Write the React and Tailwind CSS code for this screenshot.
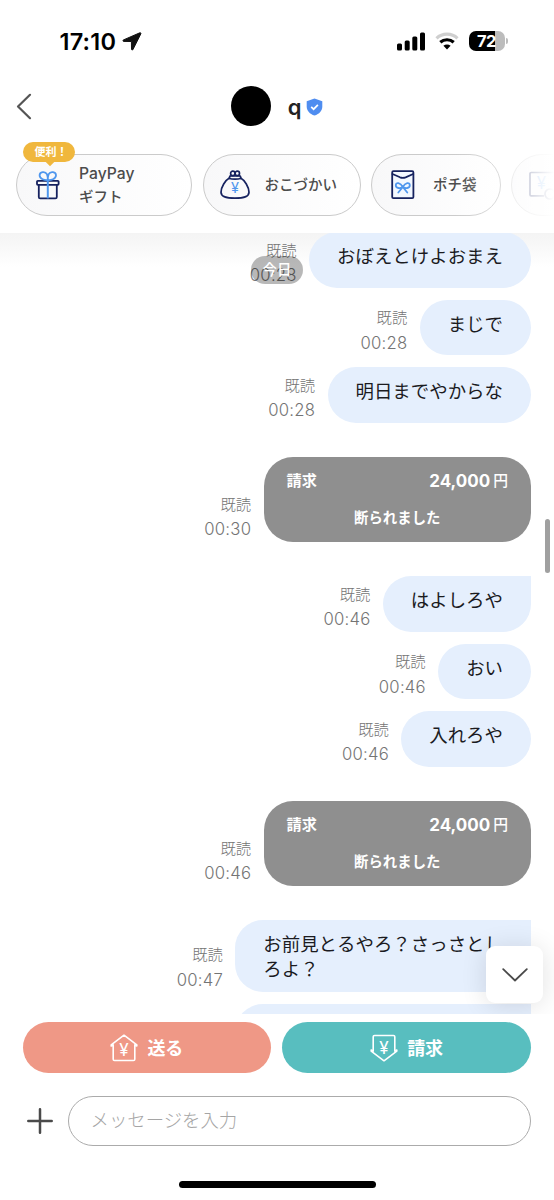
import React from 'react';
import clsx from 'clsx';

const messages = [
    { type: 'text', lines: ['おぼえとけよおまえ'], time: '00:28' },
    { type: 'text', lines: ['まじで'], time: '00:28' },
    { type: 'text', lines: ['明日までやからな'], time: '00:28' },
    { type: 'request', amount: '24,000', status: '断られました', time: '00:30' },
    { type: 'text', lines: ['はよしろや'], time: '00:46', first: true },
    { type: 'text', lines: ['おい'], time: '00:46' },
    { type: 'text', lines: ['入れろや'], time: '00:46' },
    { type: 'request', amount: '24,000', status: '断られました', time: '00:46' },
    { type: 'text', lines: ['お前見とるやろ？さっさとし', 'ろよ？'], time: '00:47', first: true },
];

const Yen = ({ x, y, size, fill }) => (
    <text x={x} y={y} fontSize={size} fill={fill} stroke="none" textAnchor="middle" fontWeight="400" fontFamily="Inter, sans-serif">¥</text>
);

const GiftIcon = () => (
    <svg width="24" height="30" viewBox="0 0 24 30" fill="none" strokeWidth="1.8" strokeLinejoin="round">
        <rect x="1" y="10.8" width="21.6" height="4" rx="0.8" stroke="#16225f" />
        <path d="M2.800 15v12c0 .9.500 1.400 1.400 1.400h15.200c.9 0 1.400-.5 1.400-1.400V15" stroke="#16225f" />
        <path d="M11.800 9.500V28.400" stroke="#4f97ee" strokeWidth="2" />
        <path d="M11.800 10C9 10.300 3.600 9.300 3.600 5.300c0-3.600 5.600-4.500 7.300-1.100.8 1.700.9 3.800.9 5.800zM11.800 10c2.800.300 8.200-.700 8.200-4.700 0-3.600-5.600-4.500-7.300-1.100-.8 1.700-.9 3.800-.9 5.800z" stroke="#4f97ee" />
    </svg>
);

const PurseIcon = () => (
    <svg width="30" height="30" viewBox="0 0 30 30" fill="none" stroke="#16225f" strokeWidth="1.7" strokeLinejoin="round" strokeLinecap="round">
        <circle cx="12.800" cy="3.400" r="2.200" />
        <circle cx="17.300" cy="3.400" r="2.200" />
        <path d="M9.500 8.400V7.200c0-.9.500-1.400 1.400-1.400h8.400c.9 0 1.400.5 1.400 1.400v1.200" />
        <path d="M9 8.200C5.500 10 1 17.200 1 22.200c0 4 4.500 6 14 6s14-2 14-6c0-5-4.500-12.200-8-14-3 1.300-9 1.300-12 0z" />
        <Yen x="15" y="23" size="14.500" fill="#4f97ee" />
    </svg>
);

const EnvelopeIcon = () => (
    <svg width="24" height="30" viewBox="0 0 24 30" fill="none" strokeWidth="1.800" strokeLinejoin="round" strokeLinecap="round">
        <rect x="1.200" y="1.200" width="21.200" height="27" rx="1.200" stroke="#16225f" fill="#f3f8ff" />
        <path d="M1.500 4l7.500 3.300c2 .8 3.600.8 5.600 0L22.200 4" stroke="#16225f" />
        <path d="M11.800 17c-2.500-4.300-7-5.200-7-1.800 0 3.800 4.700 3.100 7 1.800zM11.800 17c2.500-4.300 7-5.200 7-1.800 0 3.800-4.700 3.100-7 1.800zM11.800 17l-4.500 5.500M11.800 17l4.500 5.500" stroke="#4f97ee" />
    </svg>
);

const TicketIcon = () => (
    <svg width="30" height="30" viewBox="0 0 30 30" fill="none" stroke="#16225f" strokeWidth="1.700" strokeLinejoin="round">
        <path d="M30 2.500H2.200c-.7 0-1.200.5-1.200 1.200v21c0 .7.500 1.200 1.200 1.200H15" />
        <circle cx="21" cy="24" r="5" />
        <Yen x="12.500" y="18.500" size="17" fill="#4f97ee" />
    </svg>
);

const SendIcon = () => (
    <svg width="28" height="28" viewBox="0 0 28 28" fill="none" stroke="#fff" strokeWidth="1.600" strokeLinejoin="round" strokeLinecap="round">
        <path d="M3.200 10.800L1.200 12V10.800L14 1.200l12.800 9.600V12l-2-1.200M3.200 10.800v14.400c0 .8.500 1.300 1.300 1.300h19c.8 0 1.300-.5 1.300-1.300V10.800" />
        <Yen x="14" y="21.700" size="17" fill="#fff" />
    </svg>
);

const RequestIcon = () => (
    <svg width="28" height="28" viewBox="0 0 28 28" fill="none" stroke="#fff" strokeWidth="1.600" strokeLinejoin="round" strokeLinecap="round">
        <path d="M3.200 17.200L1.200 16v1.200L14 26.800l12.800-9.600V16l-2 1.200M3.200 17.200V2.800c0-.8.500-1.300 1.300-1.300h19c.8 0 1.300.5 1.300 1.300v14.400" />
        <Yen x="14" y="19.500" size="17" fill="#fff" />
    </svg>
);

const StatusBar = () => (
    <div className="flex h-[82px] items-center justify-between pl-[59.500px] pr-[46px]">
        <div className="flex items-center gap-[5px]">
            <span className="w-[57px] whitespace-nowrap pt-[1px] text-[23.500px] font-semibold leading-none tracking-[0.200px] text-black">17:10</span>
            <svg width="20" height="19" viewBox="0 0 19 19"><path d="M17.300.8L1 7.900c-1 .5-.7 1.500.3 1.500l7.600.1.1 7.600c0 1.100 1.100 1.300 1.500.3L18.300 1.900c.3-.8-.2-1.400-1-1.100z" fill="#111" stroke="#111" strokeWidth="1" /></svg>
        </div>
        <div className="flex items-center">
            <svg width="28" height="19" viewBox="0 0 28 19" fill="#000">
                <rect x="0" y="11.500" width="5" height="7" rx="1.500" />
                <rect x="7.700" y="8.500" width="5" height="10" rx="1.500" />
                <rect x="15.300" y="4.500" width="5" height="14" rx="1.500" />
                <rect x="23" y="0.500" width="5" height="18" rx="1.500" />
            </svg>
            <svg className="ml-[10px]" width="24" height="18" viewBox="0 0 24 18" fill="none">
                <path d="M1.500 6.300C7.300.8 16.700.8 22.500 6.300" stroke="#cfcfcf" strokeWidth="3.200" />
                <path d="M5.300 10.300c3.800-3.400 9.600-3.400 13.400 0" stroke="#000" strokeWidth="3.200" />
                <path d="M12 17.500l-3.600-3.700c2-1.700 5.200-1.700 7.200 0z" fill="#000" />
            </svg>
            <div className="ml-[10px] flex h-[20px] w-[36px] items-center justify-center rounded-[7px] bg-linear-to-r from-black from-73% to-[#bcbcbc] to-73% pr-[1px] text-[16.500px] font-bold leading-none tracking-[-0.500px] text-white">72</div>
            <div className="ml-[1px] h-[6px] w-[2px] rounded-r-full bg-[#bcbcbc]" />
        </div>
    </div>
);

const Header = () => (
    <div className="relative flex h-[48px] items-center justify-center">
        <svg className="absolute left-[16px] top-[11px]" width="16" height="27" viewBox="0 0 16 27" fill="none" stroke="#555" strokeWidth="2.200" strokeLinecap="round" strokeLinejoin="round">
            <path d="M14 1.800L2 13.500 14 25.200" />
        </svg>
        <div className="h-[40px] w-[40px] rounded-full bg-black" />
        <span className="ml-[17px] pt-[2px] text-[22px] font-semibold leading-none text-[#222]">q</span>
        <svg className="ml-[5px] mt-[1px]" width="17" height="18" viewBox="0 0 17 18">
            <path d="M8.500.5l7.800 2.700v5.300c0 4.300-3 7.600-7.800 9-4.800-1.400-7.800-4.700-7.800-9V3.200z" fill="#4f8df0" />
            <path d="M5.200 8.800l2.400 2.400 4.300-4.400" fill="none" stroke="#fff" strokeWidth="1.700" />
        </svg>
    </div>
);

const Chip = ({ className, icon, children }) => (
    <div className={clsx('flex h-[62.500px] shrink-0 items-center rounded-[31px] border border-[#cbcbcb] bg-linear-to-r from-[#f8f8f9] to-white text-[14.500px] font-medium leading-[22.500px] text-[#4c4c4c]', className)}>
        {icon}
        {children}
    </div>
);

const Shortcuts = () => (
    <div className="relative flex h-[103px] gap-[10.500px] overflow-hidden pl-4 pt-[23.500px]">
        <Chip className="w-[176px] pl-[19px]" icon={<GiftIcon />}>
            <span className="ml-[19px] pt-[2px]"><span className="text-[15.700px]">PayPay</span><br />ギフト</span>
        </Chip>
        <Chip className="w-[158px] pl-[16px]" icon={<PurseIcon />}>
            <span className="ml-[15px] pt-[1px]">おこづかい</span>
        </Chip>
        <Chip className="w-[129.500px] pl-[19px]" icon={<EnvelopeIcon />}>
            <span className="ml-[18px] pt-[1px]">ポチ袋</span>
        </Chip>
        <Chip className="w-[160px] pl-[17px] opacity-60" icon={<TicketIcon />} />
        <div className="absolute left-[23px] top-[12px] flex h-[20px] w-[52px] items-center justify-center rounded-full bg-[#f0b73d] pl-1 text-[11px] font-bold leading-none text-white">
            便利！
            <div className="absolute left-[24px] top-[16.500px] h-[6px] w-[6px] rotate-45 bg-[#f0b73d]" />
        </div>
        <div className="absolute right-0 top-0 h-full w-[100px] bg-linear-to-r from-white/0 via-white/35 to-white" />
    </div>
);

const Meta = ({ time }) => (
    <div className="mr-[12.500px] text-right font-light leading-[25px] text-[#747474]">
        <div className="text-[15.300px]">既読</div>
        <div className="relative top-[0.500px] -mr-[0.250px] text-[16.700px] tracking-[0.250px]">{time}</div>
    </div>
);

const Message = ({ message }) => {
    if (message.type === 'request') {
        return (
            <div className="my-[22.500px] flex items-end justify-end">
                <Meta time={message.time} />
                <div className="h-[84.500px] w-[267.500px] rounded-[29px] bg-[#8f8f8f] px-[23px] pt-[12px] font-bold text-white">
                    <div className="flex items-center justify-between leading-[24px]">
                        <span className="text-[15.200px]">請求</span>
                        <span className="flex items-center gap-[3px]"><span className="text-[17px]">{message.amount}</span><span className="text-[14.800px] font-medium">円</span></span>
                    </div>
                    <div className="mt-[13px] text-center text-[14.400px] leading-[24px]">{message.status}</div>
                </div>
            </div>
        );
    }

    return (
        <div className="flex items-end justify-end">
            <Meta time={message.time} />
            <div className={clsx('min-h-[55.500px] whitespace-nowrap rounded-[28px] bg-[#e5effd] px-[28px] pb-[11.500px] pt-[12px] text-[18.450px] leading-[24.250px] text-[#1b1b1f]', message.first && 'rounded-tr-none')}>
                {message.lines.map((line) => <div key={line}>{line}</div>)}
            </div>
        </div>
    );
};

const App = () => {
    return (
        <div className="flex h-[1200px] w-[554px] flex-col overflow-hidden bg-white font-['Inter','Noto_Sans_CJK_JP',sans-serif]" lang="ja">
            <StatusBar />
            <Header />
            <Shortcuts />

            <div className="relative h-[781px] shrink-0 overflow-hidden">
                <div className="absolute inset-x-0 top-0 h-[34px] bg-linear-to-b from-[#f4f4f4] to-white" />
                <div className="relative -mt-[0.700px] flex flex-col gap-3 pr-[23px]">
                    {messages.map((message, i) => <Message key={i} message={message} />)}
                    <div className="h-[56px] w-[296px] shrink-0 self-end rounded-tl-[28px] bg-[#e5effd]" />
                </div>

                <div className="absolute left-[251px] top-[23px] flex h-[28px] w-[52px] items-center justify-center rounded-full bg-black/28 text-[14.400px] font-medium leading-none text-white">今日</div>
                <div className="absolute right-[4px] top-[286px] h-[54px] w-[5px] rounded-full bg-[#a0a0a0]" />
                <button className="absolute right-[11px] top-[713px] flex h-[57px] w-[57px] items-center justify-center rounded-[9px] bg-white shadow-[0_2px_26px_rgba(0,0,0,0.12)]">
                    <svg width="26" height="14" viewBox="0 0 26 14" fill="none" stroke="#4a4a4a" strokeWidth="1.800" strokeLinecap="round" strokeLinejoin="round"><path d="M1.200 1.200L13 12.500 24.800 1.200" /></svg>
                </button>
            </div>

            <div className="mt-[8px] flex h-[51px] shrink-0 gap-[11px] pl-[22.500px] pr-[23px] text-[18px] font-bold text-white">
                <button className="flex flex-1 items-center justify-center gap-[9px] rounded-full bg-[#ef9886]"><SendIcon /><span className="pt-[2px]">送る</span></button>
                <button className="flex flex-1 items-center justify-center gap-[9px] rounded-full bg-[#58bebf]"><RequestIcon /><span className="pt-[2px]">請求</span></button>
            </div>

            <div className="mt-[22.500px] flex h-[50px] shrink-0 items-center pl-[26.500px] pr-[23px]">
                <svg width="26" height="26" viewBox="0 0 26 26" stroke="#4a4a4a" strokeWidth="2.500" strokeLinecap="round"><path d="M13 1.300v23.400M1.300 13h23.400" /></svg>
                <div className="ml-[15px] flex h-full flex-1 items-center rounded-full border border-[#ababab] pl-[22px] pt-[1px] text-[18.400px] font-light text-[#a5a5a5]">メッセージを入力</div>
            </div>

            <div className="mx-auto mt-[35.500px] h-[7px] w-[197px] shrink-0 rounded-full bg-black" />
        </div>
    );
};

export default App;
